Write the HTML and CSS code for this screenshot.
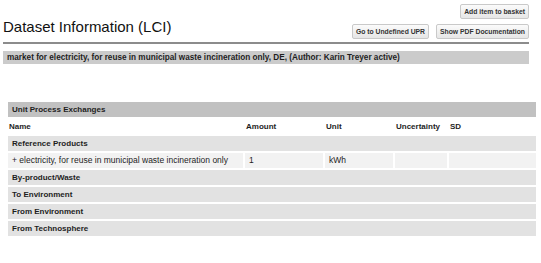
FILE: index.html
```html
<!DOCTYPE html>
<html lang="en">
<head>
    <meta charset="UTF-8" />
    <title>Dataset Information (LCI)</title>
    <link rel="stylesheet" href="styles.css">
</head>
<body>
    <div class="top">
        <div class="header">
            <h1>Dataset Information (LCI)</h1>
            <div class="actions">
                <div class="btn-row">
                    <button class="btn">Add item to basket</button>
                </div>
                <div class="btn-row">
                    <button class="btn">Go to Undefined UPR</button>
                    <button class="btn">Show PDF Documentation</button>
                </div>
            </div>
        </div>
        <div class="rule"></div>
        <div class="dataset-name">market for electricity, for reuse in municipal waste incineration only, DE, (Author: Karin Treyer active)</div>
    </div>

    <table class="exchanges">
        <colgroup>
            <col class="col-name">
            <col class="col-amount">
            <col class="col-unit">
            <col class="col-unc">
            <col class="col-sd">
        </colgroup>
        <tr class="section-head"><td colspan="5">Unit Process Exchanges</td></tr>
        <tr class="col-head">
            <td>Name</td>
            <td>Amount</td>
            <td>Unit</td>
            <td>Uncertainty</td>
            <td>SD</td>
        </tr>
        <tr class="group"><td colspan="5">Reference Products</td></tr>
        <tr class="item">
            <td>+ electricity, for reuse in municipal waste incineration only</td>
            <td>1</td>
            <td>kWh</td>
            <td></td>
            <td></td>
        </tr>
        <tr class="group"><td colspan="5">By-product/Waste</td></tr>
        <tr class="group"><td colspan="5">To Environment</td></tr>
        <tr class="group"><td colspan="5">From Environment</td></tr>
        <tr class="group"><td colspan="5">From Technosphere</td></tr>
    </table>
</body>
</html>
```

FILE: styles.css
```css
/* Page */
body {
    margin: 0;
    font-family: 'Liberation Sans', Arial, sans-serif;
    color: #1e1e1e;
    background: #ffffff;
}

/* Top block: title, buttons, dataset name */
.top {
    padding: 4px 12px 0 3px;
}

.header {
    display: flex;
    justify-content: space-between;
    align-items: flex-end;
}

h1 {
    margin: 0 0 3px 0;
    font-size: 15px;
    font-weight: normal;
    line-height: 18px;
    color: #111;
}

.actions {
    display: flex;
    flex-direction: column;
    align-items: flex-end;
    gap: 5px;
}

.btn-row {
    display: flex;
    gap: 7px;
}

.btn {
    height: 15px;
    padding: 0 3px;
    font-family: inherit;
    font-size: 6.8px;
    font-weight: bold;
    color: #333;
    background: linear-gradient(#fbfbfb, #e6e6e6);
    border: 1px solid #c9c9c9;
    border-radius: 2px;
}

.rule {
    margin-top: 3px;
    border-top: 2px solid #8c8c8c;
}

.dataset-name {
    margin-top: 7px;
    padding: 0 4px;
    height: 13px;
    line-height: 13px;
    font-size: 8.2px;
    font-weight: bold;
    background: #cbcbcb;
}

/* Exchanges table */
.exchanges {
    margin: 36px 0 0 6px;
    width: 532px;
    table-layout: fixed;
    border-collapse: separate;
    border-spacing: 2px;
    font-size: 8.5px;
}

.col-name { width: 235px; }
.col-amount { width: 78px; }
.col-unit { width: 68px; }
.col-unc { width: 52px; }
.col-sd { width: 87px; }

.exchanges td {
    height: 15px;
    padding: 0 4px;
    line-height: 15px;
    white-space: nowrap;
    overflow: hidden;
}

.section-head td {
    background: #c1c1c1;
    font-weight: bold;
    font-size: 8px;
}

.col-head td {
    padding-left: 1px;
    font-weight: bold;
    font-size: 8px;
}

.group td {
    background: #e2e2e2;
    font-weight: bold;
    font-size: 8px;
}

.item td {
    background: #f2f2f2;
}
```
